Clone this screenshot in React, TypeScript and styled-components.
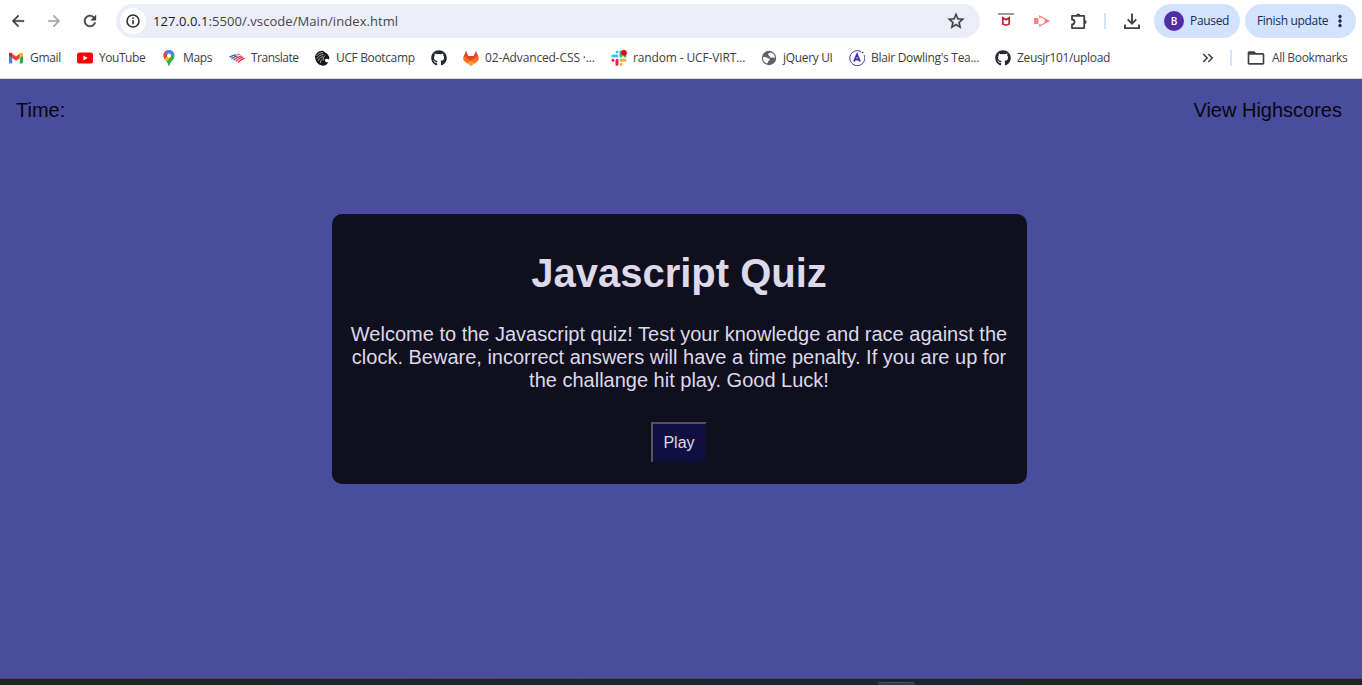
import React from "react";
import styled, { createGlobalStyle } from "styled-components";
import {
  MdArrowBack, MdArrowForward, MdRefresh, MdStarOutline,
  MdMoreVert, MdKeyboardDoubleArrowRight, MdFolderOpen,
} from "react-icons/md";
import { FaGithub } from "react-icons/fa";

const Global = createGlobalStyle`
  * { box-sizing: border-box; }
  body { margin: 0; overflow: hidden; background: #484d9d; }
`;
const Screen = styled.div`
  display: flex; flex-direction: column; width: 1362px; height: 685px;
`;
const Chrome = styled.header`
  height: 79px; flex: none; background: #fff; border-bottom: 1px solid #d3d8d3;
  font-family: "Open Sans", "Noto Sans", sans-serif; font-size: 12px; color: #3c3e41;
`;
const Toolbar = styled.div`
  display: flex; align-items: center; height: 42px; padding-left: 9px;
`;
const NavButton = styled.span<{ $dim?: boolean }>`
  display: flex; width: 36px; flex: none;
  color: ${(p) => (p.$dim ? "#a9a9a9" : "#3f4144")};
  path:not([fill="none"]) { stroke: currentColor; stroke-width: 0.5px; }
  path[fill="none"] { stroke: none; }
`;
const AddressBar = styled.div`
  display: flex; align-items: center; width: 864px; height: 34px; flex: none;
  border-radius: 17px; background: #ebeef8; padding: 0 14px 0 4px; margin-left: -1px;
  path[fill="none"][d^="M0 0"] { stroke: none; }
`;
const SiteInfo = styled.span`
  display: flex; align-items: center; justify-content: center;
  width: 26px; height: 26px; border-radius: 50%; background: #fff;
`;
const Url = styled.span`
  flex: 1; margin-left: 7px; font-size: 13px; color: #45474b; letter-spacing: 0.07px;
  b { font-weight: 400; color: #1f2023; }
`;
const Tools = styled.div`
  display: flex; align-items: center; color: #3f4144;
`;
const Slot = styled.span<{ $w: number }>`
  display: flex; width: ${(p) => p.$w}px; flex: none; align-items: center;
`;
const Divider = styled.span`
  width: 2px; height: 16px; background: #d3e3fd; flex: none;
`;
const Pill = styled.div<{ $w: number; $pad: string; $ml: number }>`
  display: flex; align-items: center; height: 34px; width: ${(p) => p.$w}px;
  margin-left: ${(p) => p.$ml}px; padding: ${(p) => p.$pad}; flex: none;
  border-radius: 17px; background: #d3e3fd; color: #172b55; white-space: nowrap;
  path:not([fill="none"]) { stroke: currentColor; stroke-width: 0.6px; }
  path[fill="none"] { stroke: none; }
`;
const Avatar = styled.span`
  display: flex; align-items: center; justify-content: center; width: 20px; height: 20px;
  border-radius: 50%; background: #512da8; color: #fff; font-size: 10px; font-weight: 600; margin-right: 6px;
`;
const Bookmarks = styled.nav`
  display: flex; align-items: center; height: 32px; padding-left: 8px;
`;
const Bookmark = styled.span`
  display: flex; align-items: center; height: 20px; gap: 6px; margin-right: 16px; flex: none;
  svg { flex: none; }
`;
const Label = styled.span<{ $w: number; $ls?: number }>`
  width: ${(p) => p.$w}px; letter-spacing: ${(p) => p.$ls ?? -0.33}px; white-space: nowrap; line-height: 16px;
`;
const BookmarkEnd = styled.div`
  display: flex; align-items: center; margin-left: 73px; color: #3f4144;
`;
const Page = styled.main`
  flex: 1; background: #484d9d; font-family: "Liberation Sans", Arial, sans-serif;
`;
const TopLinks = styled.div`
  display: flex; justify-content: space-between; padding: 20px 20px 0 16px;
  font-size: 20px; line-height: 23px; color: #07070c;
`;
const Card = styled.section`
  width: 695px; height: 270px; margin: 92px 0 0 332px; padding: 36px 11px 0 10px;
  display: flex; flex-direction: column; align-items: center;
  border-radius: 10px; background: #100f1d; color: #dcd9ea; text-align: center;
`;
const Title = styled.h1`
  margin: 0; font-size: 40px; line-height: 46px;
`;
const Intro = styled.p`
  margin: 27px 0 0; font-size: 20px; line-height: 23px; white-space: nowrap;
`;
const Play = styled.button`
  margin-top: 30px; width: 55.6px; height: 41px; padding: 0; border: 2px solid;
  border-color: #55545e #0e0f24 #0e0f24 #55545e; background: #0f103f;
  color: #dcd9ea; font: 16px "Liberation Sans", Arial, sans-serif;
`;
const Taskbar = styled.footer`
  height: 7px; flex: none; border-top: 1px solid #4c4d58; overflow: hidden;
  background: linear-gradient(90deg, #222424, #20262b 28%, #1b2631 60%, #192532 70%, #222425 76%, #222325);
`;
const TaskTab = styled.div`
  margin: 3px 0 0 878px; width: 38px; height: 8px; border-radius: 3px 5px 0 0;
  border-top: 1px solid #4a5967; background: #2c3946;
`;

const Info = () => (
  <svg width="16" height="16" viewBox="0 0 16 16" fill="none" stroke="#2d2f32">
    <circle cx="8" cy="8" r="6" strokeWidth="1.6" />
    <path d="M8 7.2v4M8 4.6v1.500" strokeWidth="1.600" />
  </svg>
);
const Puzzle = () => (
  <svg width="20" height="20" viewBox="0 0 20 20">
    <path d="M3 4.900h12.200v12.200H3v-3.600a2.500 2.500 0 0 0 0-5z" fill="none" stroke="#3f4144" strokeWidth="1.800" strokeLinejoin="round" />
    <path d="M7.200 4.500a2 2 0 0 1 4 0zM15.600 9a2 2 0 0 1 0 4z" fill="#3f4144" />
  </svg>
);
const Download = () => (
  <svg width="20" height="20" viewBox="0 0 20 20" fill="none" stroke="#3f4144" strokeWidth="1.900">
    <path d="M10 2.500v10M5.700 8.400 10 12.700l4.300-4.300M3 13.500v3.600h14v-3.600" />
  </svg>
);
const Globe = () => (
  <svg width="16" height="16" viewBox="0 0 16 16">
    <circle cx="8" cy="8" r="7.200" fill="#5f6368" />
    <path fill="#fff" d="M9.800 2.500C8.500 3 7 3.200 7.200 4.800c.2 1 1.500.8 1.700 1.900.2.900 1.200 1.300 2.400.9 1-.4 1.900-.3 2.600.6A6 6 0 0 0 9.800 2.500zM2 7.200c1.300-.4 3.300-.2 4.300.5 1 .8 2.500.6 2.600 1.900 0 1-1.400 1-1.700 1.900-.2.800-.4 1.500-1.200 1.900A6 6 0 0 1 2 7.200z" />
  </svg>
);
const Gmail = () => (
  <svg width="16" height="16" viewBox="0 0 16 16">
    <path fill="#4285f4" d="M1 4.500v8a1 1 0 0 0 1 1h2.200V7L1 4.500z" />
    <path fill="#34a853" d="M11.800 13.500H14a1 1 0 0 0 1-1v-8L11.800 7z" />
    <path fill="#ea4335" d="M4.200 3.600 8 6.500l3.800-2.900V8L8 10.800 4.200 8z" />
    <path fill="#c5221f" d="M1 4.200c0-1.500 1.700-2 2.700-1.100l.5.400V8L1 5.700z" />
    <path fill="#fbbc04" d="M15 4.200c0-1.500-1.700-2-2.700-1.100l-.5.400V8L15 5.700z" />
  </svg>
);
const YouTube = () => (
  <svg width="16" height="16" viewBox="0 0 16 16">
    <rect y="2.400" width="16" height="11.200" rx="2.600" fill="#f00" />
    <path d="M6.300 5.500v5L10.700 8z" fill="#fff" />
  </svg>
);
const MapPin = () => (
  <svg width="16" height="16" viewBox="0 0 16 16">
    <clipPath id="pin"><path d="M8 0C4.800 0 2.500 2.500 2.500 5.500c0 2.200 1.200 3.700 2.600 5.400C6.300 12.300 7 13.200 7.300 15c.1.700.3 1 .7 1s.6-.3.7-1c.3-1.800 1-2.700 2.200-4.100 1.400-1.700 2.600-3.200 2.600-5.400C13.500 2.500 11.200 0 8 0z" /></clipPath>
    <g clipPath="url(#pin)">
      <path fill="#34a853" d="M0 0h16v16H0z" />
      <path fill="#fbbc04" d="M0 13 8 4l2 3-5.500 6z" />
      <path fill="#ea4335" d="M0 0h4l4 4-6 7z" />
      <path fill="#4285f4" d="M3.500 1 7.500 5.500 14 4V0H5z" />
    </g>
    <circle cx="8" cy="5.500" r="2" fill="#fff" />
  </svg>
);
const Flag = () => (
  <svg width="16" height="16" viewBox="0 0 16 16" strokeWidth="1.300" fill="none">
    <path stroke="#3b5ba5" d="M.6 7.200C3 6 5 5.300 7.300 4.700M2.400 8.600C4.500 7.300 6.400 6.500 8.500 5.900" />
    <path stroke="#e0344c" d="M8.500 4.400c1-.1 1.500 0 2 .2M4.500 9.900c2.500-1.800 4.700-3 8-4.100M6.700 11.200c2.200-1.900 4.700-3.400 7.300-4.400M9 12.400c1.500-1.400 3.600-3 6.500-4.200" />
  </svg>
);
const Pegasus = () => (
  <svg width="16" height="16" viewBox="0 0 16 16">
    <path fill="#15171a" d="M9 .8C6 .6 4 1.500 2.600 3.500L1 6l.3 3 1.200 3 2.500 2.500 3.500 1.200c3-.1 5-1.400 5.800-3.700-1.400.6-3 .2-3.300-1.200-.3-1.500.7-2.200 2-2l1.800.7.700-2L13.500 4 11.200 2.500z" />
    <path fill="none" stroke="#fff" strokeWidth=".6" d="M9 2.500C6 2.500 4 4 2.500 6M9.500 4.500C6.500 4.800 4.500 6 3 8.500M9 6.700C6.700 7 5 8.500 4.200 11M8.500 9c-1.500.8-2 2-2 4M11 5.500C9.500 7 9 8.500 9.300 10.500" />
  </svg>
);
const GitLab = () => (
  <svg width="16" height="16" viewBox="0 0 16 16">
    <path fill="#e24329" d="M3 .8.300 7.500 8 15.500l7.700-8L13 .8 10.700 6H5.300z" />
    <path fill="#fc6d26" d="M.3 7.400 2 6.200 8 11l6-4.800 1.700 1.200c.3 1.700-.2 3-1.500 4L8 15.700l-6.200-4.300C.5 10.400 0 9.100.3 7.400z" />
    <path fill="#fca326" d="M4.500 13.200 8 10.700l3.500 2.500L8 15.700z" />
  </svg>
);
const Slack = () => (
  <svg width="16" height="16" viewBox="0 0 16 16" fill="none" strokeWidth="3" strokeLinecap="round">
    <path stroke="#36c5f0" d="M1.800 6H6M6 1.900v.2" />
    <path stroke="#2eb67d" d="M10 2v4M14 6h.1" />
    <path stroke="#ecb22e" d="M10 10.200h4M10 14.200v.1" />
    <path stroke="#e01e5a" d="M6 10.200v4M1.900 10.200H2" />
    <circle cx="13" cy="2.800" r="2.900" fill="#e30613" />
  </svg>
);
const Apollo = () => (
  <svg width="16" height="16" viewBox="0 0 16 16" fill="none" stroke="#4630b8">
    <path d="M15.100 5A7.500 7.500 0 1 1 12.300 1.800" strokeWidth="1" />
    <circle cx="13.700" cy="2.600" r=".8" fill="#4630b8" stroke="none" />
    <path d="M5 11.500 8 4.500l3 7M6.500 9.500h3" strokeWidth="1.900" />
  </svg>
);
const Shield = () => (
  <svg width="16" height="16" viewBox="0 0 16 16">
    <path fill="#9b9b9b" d="M0 0h16v2H0z" />
    <path fill="none" stroke="#c8202f" strokeWidth="1.700" d="M4.800 4.800v6.200L8 12.200l3.200-1.200V4.800L8 6.800z" />
  </svg>
);
const Recorder = () => (
  <svg width="16" height="16" viewBox="0 0 16 16">
    <path fill="#ff8080" d="M0 5h4.500v6H0z" />
    <path fill="none" stroke="#ff8080" strokeWidth="1.300" d="M5.800 5V3L14.500 8 5.800 13V11" />
    <path fill="#ff8080" d="M10.500 5.200 15.500 8l-5 2.800z" />
  </svg>
);

export default function App() {
  return (
    <Screen>
      <Global />
      <Chrome>
        <Toolbar>
          <NavButton><MdArrowBack size={18} /></NavButton>
          <NavButton $dim><MdArrowForward size={18} /></NavButton>
          <NavButton><MdRefresh size={18} /></NavButton>
          <AddressBar>
            <SiteInfo><Info /></SiteInfo>
            <Url><b>127.0.0.1</b>:5500/.vscode/Main/index.html</Url>
            <MdStarOutline size={20} color="#3f4144" stroke="#3f4144" strokeWidth={0.4} />
          </AddressBar>
          <Tools>
            <Slot $w={18} />
            <Slot $w={36}><Shield /></Slot>
            <Slot $w={35}><Recorder /></Slot>
            <Slot $w={35}><Puzzle /></Slot>
            <Divider />
            <Slot $w={16} />
            <Slot $w={20}><Download /></Slot>
            <Pill $w={86} $ml={12} $pad="0 0 0 10px"><Avatar>B</Avatar><Label $w={40}>Paused</Label></Pill>
            <Pill $w={111} $ml={5} $pad="0 0 0 12px"><Label $w={74}>Finish update</Label><MdMoreVert size={18} /></Pill>
          </Tools>
        </Toolbar>
        <Bookmarks>
          <Bookmark><Gmail /><Label $w={31}>Gmail</Label></Bookmark>
          <Bookmark><YouTube /><Label $w={46} $ls={-0.45}>YouTube</Label></Bookmark>
          <Bookmark><MapPin /><Label $w={30}>Maps</Label></Bookmark>
          <Bookmark><Flag /><Label $w={47} $ls={-0.5}>Translate</Label></Bookmark>
          <Bookmark><Pegasus /><Label $w={79} $ls={-0.36}>UCF Bootcamp</Label></Bookmark>
          <Bookmark><FaGithub size={16} color="#24292f" /></Bookmark>
          <Bookmark><GitLab /><Label $w={110} $ls={-0.14}>02-Advanced-CSS ·...</Label></Bookmark>
          <Bookmark><Slack /><Label $w={112} $ls={-0.14}>random - UCF-VIRT...</Label></Bookmark>
          <Bookmark><Globe /><Label $w={50}>jQuery UI</Label></Bookmark>
          <Bookmark><Apollo /><Label $w={108} $ls={-0.3}>Blair Dowling's Tea...</Label></Bookmark>
          <Bookmark><FaGithub size={16} color="#24292f" /><Label $w={93} $ls={-0.35}>Zeusjr101/upload</Label></Bookmark>
          <BookmarkEnd>
            <Slot $w={31}><MdKeyboardDoubleArrowRight size={18} /></Slot>
            <Divider />
            <Slot $w={14} />
            <Slot $w={26}><MdFolderOpen size={20} /></Slot>
            <Label $w={76} $ls={-0.35}>All Bookmarks</Label>
          </BookmarkEnd>
        </Bookmarks>
      </Chrome>
      <Page>
        <TopLinks><span>Time:</span><span>View Highscores</span></TopLinks>
        <Card>
          <Title>Javascript Quiz</Title>
          <Intro>
            Welcome to the Javascript quiz! Test your knowledge and race against the<br />
            clock. Beware, incorrect answers will have a time penalty. If you are up for<br />
            the challange hit play. Good Luck!
          </Intro>
          <Play>Play</Play>
        </Card>
      </Page>
      <Taskbar><TaskTab /></Taskbar>
    </Screen>
  );
}
